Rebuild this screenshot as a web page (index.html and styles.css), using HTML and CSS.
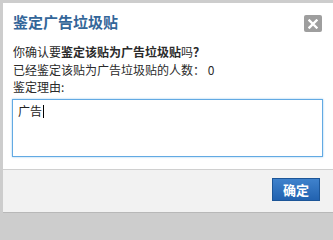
FILE: index.html
```html
<!DOCTYPE html>
<html lang="zh-CN">
<head>
<meta charset="utf-8">
<title>鉴定广告垃圾贴</title>
<link rel="stylesheet" href="styles.css">
</head>
<body>
<div class="dialog">
  <div class="header">
    <h1 class="title">鉴定广告垃圾贴</h1>
    <span class="close" aria-label="关闭">
      <svg width="10" height="10" viewBox="0 0 10 10"><path d="M1.5 1.5 L8.5 8.5 M8.5 1.5 L1.5 8.5" stroke="#fff" stroke-width="2.4" stroke-linecap="square"/></svg>
    </span>
  </div>
  <div class="body">
    <p class="line">你确认要<b>鉴定该贴为广告垃圾贴</b>吗<b>？</b></p>
    <p class="line">已经鉴定该贴为广告垃圾贴的人数： 0</p>
    <p class="line">鉴定理由:</p>
    <div class="textbox" role="textbox">广告<span class="caret"></span></div>
  </div>
  <div class="footer">
    <button class="btn">确定</button>
  </div>
</div>
</body>
</html>
```
FILE: styles.css
```css
html, body {
  margin: 0;
  padding: 0;
}
body {
  background: #cdcdcd;
  overflow: hidden;
  width: 333px;
  height: 218px;
  font-family: "Noto Sans CJK SC", "Liberation Sans", sans-serif;
}
.dialog {
  margin: 3px 0 0 3px;
  width: 330px;
  background: #fff;
  border-bottom: 1px solid #b8b8b8;
}
.header {
  display: flex;
  align-items: center;
  justify-content: space-between;
  padding: 9px 11px 0 10px;
  height: 20px;
}
.title {
  margin: 0;
  font-size: 15px;
  line-height: 20px;
  font-weight: bold;
  color: #336699;
}
.close {
  display: flex;
  align-items: center;
  justify-content: center;
  width: 18px;
  height: 17px;
  margin-top: 3px;
  background: #9e9e9e;
  border-radius: 2px;
}
.body {
  padding: 11px 10px 12px 10px;
}
.line {
  margin: 0;
  font-size: 12px;
  line-height: 17.5px;
  color: #2a2a2a;
}
.line b {
  font-weight: bold;
}
.textbox {
  margin: 3px 0 0 -1px;
  box-sizing: border-box;
  height: 58px;
  border: 1px solid #62aae3;
  box-shadow: 0 0 2px #9ccbf0;
  padding: 3px 5px;
  font-size: 12px;
  line-height: 16px;
  color: #222;
}
.caret {
  display: inline-block;
  width: 1px;
  height: 13px;
  background: #000;
  vertical-align: -2px;
  margin-left: 1px;
}
.footer {
  display: flex;
  justify-content: flex-end;
  background: #f2f2f2;
  border-top: 1px solid #d0d0d0;
  padding: 8px 13px 11px 0;
}
.btn {
  width: 48px;
  height: 23px;
  padding: 0;
  border: 1px solid #1c5597;
  background: linear-gradient(#3f82cc, #2262b0);
  color: #fff;
  font-family: "Noto Sans CJK SC", sans-serif;
  font-size: 13px;
  font-weight: bold;
  line-height: 21px;
}
```
